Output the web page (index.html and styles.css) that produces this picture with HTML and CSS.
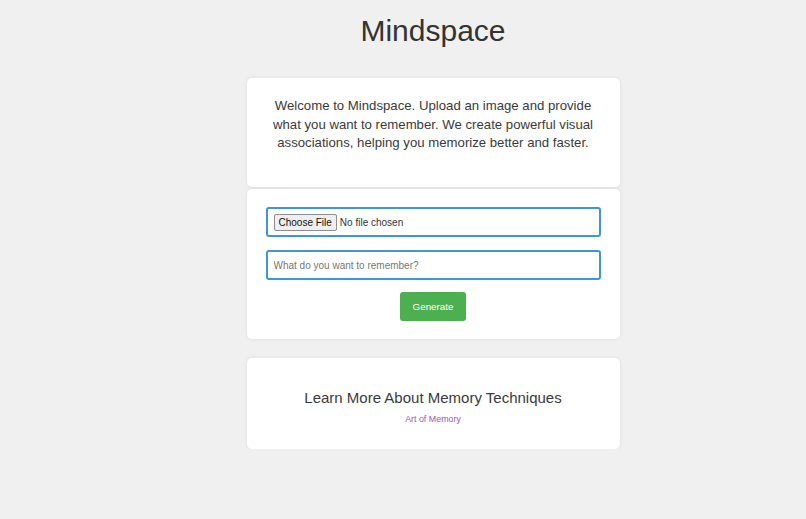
FILE: index.html
```html
<!DOCTYPE html>
<html lang="en">
<head>
    <meta charset="UTF-8">
    <meta name="viewport" content="width=device-width, initial-scale=1.0">
    <title>Mindspace</title>
    <link rel="stylesheet" href="styles.css">
</head>
<body>
    <div class="page">
        <h1>Mindspace</h1>
        <div class="card intro">
            <p>Welcome to Mindspace. Upload an image and provide what you want to remember. We create powerful visual associations, helping you memorize better and faster.</p>
        </div>
        <div class="card form-card">
            <form class="upload-form">
                <input type="file" id="imagen" class="field">
                <input type="text" id="texto" class="field" placeholder="What do you want to remember?">
                <button type="button">Generate</button>
            </form>
        </div>
        <div class="card resources">
            <h2>Learn More About Memory Techniques</h2>
            <a href="#">Art of Memory</a>
        </div>
    </div>
</body>
</html>
```

FILE: styles.css
```css
body {
    margin: 0;
    background-color: #f0f0f0;
    font-family: "Liberation Sans", Arial, sans-serif;
    color: #333;
}
.page {
    width: 373px;
    margin: 0 auto;
    padding-left: 60px;
    text-align: center;
}
h1 {
    margin: 0;
    padding-top: 12px;
    font-size: 30px;
    font-weight: normal;
    line-height: 37px;
    height: 66px;
}
.card {
    background-color: white;
    border-radius: 5px;
    box-shadow: 0 0 4px rgba(0, 0, 0, 0.08);
    padding: 20px 19px;
}
.intro {
    height: 70px;
    padding-top: 19px;
}
.intro p {
    margin: 0;
    font-size: 13.2px;
    line-height: 18.5px;
    color: #3a3a3a;
}
.form-card {
    margin-top: 2px;
    padding-top: 18px;
    padding-bottom: 18px;
}
.upload-form {
    display: flex;
    flex-direction: column;
    align-items: center;
    gap: 13px;
}
.field {
    box-sizing: border-box;
    width: 100%;
    height: 30px;
    padding: 5px 6px;
    border: 2px solid #3d96d8;
    border-radius: 3px;
    font-family: "Liberation Sans", Arial, sans-serif;
    font-size: 10px;
    color: #333;
    background: white;
}
.field::placeholder {
    color: #777;
}
.field::file-selector-button {
    font-family: "Liberation Sans", Arial, sans-serif;
    font-size: 10px;
    padding: 2px 4px;
    margin-right: 3px;
    border: 1px solid #8f8f8f;
    border-radius: 2px;
    background-color: #efefef;
    color: #111;
}
button {
    margin-top: -1px;
    width: 66px;
    height: 29px;
    background-color: #4caf50;
    color: white;
    font-family: "Liberation Sans", Arial, sans-serif;
    font-size: 9.8px;
    border: none;
    border-radius: 3px;
    cursor: pointer;
}
button:hover {
    background-color: #43a047;
}
.resources {
    margin-top: 19px;
    height: 51px;
    padding-top: 20px;
}
.resources h2 {
    margin: 10px 0 0;
    font-size: 15px;
    font-weight: normal;
    line-height: 20px;
    color: #3a3a3a;
}
.resources a {
    font-size: 8.9px;
    color: #9b59b6;
    text-decoration: none;
}
```
